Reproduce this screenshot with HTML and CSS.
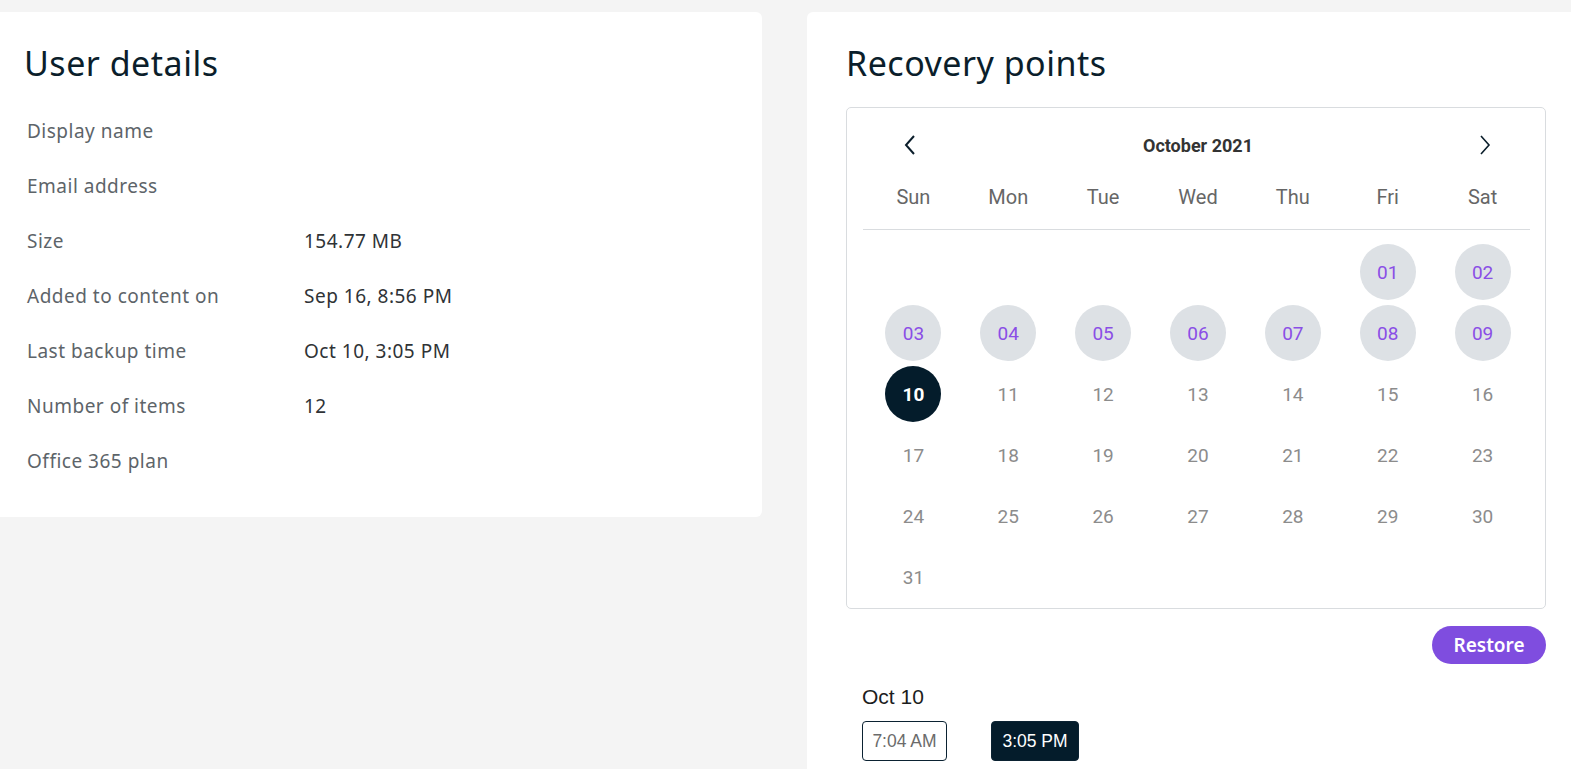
FILE: index.html
```html
<!DOCTYPE html>
<html lang="en">
<head>
  <meta charset="UTF-8">
  <title>User details</title>
  <link rel="stylesheet" href="styles.css">
</head>
<body>
  <div class="page">
    <section class="card user-card">
      <h1 class="card-title">User details</h1>
      <div class="details">
        <div class="row"><span class="label">Display name</span><span class="value"></span></div>
        <div class="row"><span class="label">Email address</span><span class="value"></span></div>
        <div class="row"><span class="label">Size</span><span class="value">154.77 MB</span></div>
        <div class="row"><span class="label">Added to content on</span><span class="value">Sep 16, 8:56 PM</span></div>
        <div class="row"><span class="label">Last backup time</span><span class="value">Oct 10, 3:05 PM</span></div>
        <div class="row"><span class="label">Number of items</span><span class="value">12</span></div>
        <div class="row"><span class="label">Office 365 plan</span><span class="value"></span></div>
      </div>
    </section>

    <section class="card recovery-card">
      <h1 class="card-title">Recovery points</h1>
      <div class="calendar">
        <div class="cal-head">
          <button class="nav prev">
            <svg width="14" height="22" viewBox="0 0 14 22"><path d="M11 2 L3 11 L11 20" fill="none" stroke="#0b1e2b" stroke-width="2"/></svg>
          </button>
          <div class="month">October 2021</div>
          <button class="nav next">
            <svg width="14" height="22" viewBox="0 0 14 22"><path d="M3 2 L11 11 L3 20" fill="none" stroke="#0b1e2b" stroke-width="1.6"/></svg>
          </button>
        </div>
        <div class="weekdays">
          <span>Sun</span><span>Mon</span><span>Tue</span><span>Wed</span><span>Thu</span><span>Fri</span><span>Sat</span>
        </div>
        <div class="days">
          <span></span><span></span><span></span><span></span><span></span>
          <span class="day has">01</span><span class="day has">02</span>
          <span class="day has">03</span><span class="day has">04</span><span class="day has">05</span><span class="day has">06</span><span class="day has">07</span><span class="day has">08</span><span class="day has">09</span>
          <span class="day selected">10</span><span class="day">11</span><span class="day">12</span><span class="day">13</span><span class="day">14</span><span class="day">15</span><span class="day">16</span>
          <span class="day">17</span><span class="day">18</span><span class="day">19</span><span class="day">20</span><span class="day">21</span><span class="day">22</span><span class="day">23</span>
          <span class="day">24</span><span class="day">25</span><span class="day">26</span><span class="day">27</span><span class="day">28</span><span class="day">29</span><span class="day">30</span>
          <span class="day">31</span>
        </div>
      </div>
      <div class="actions">
        <button class="restore">Restore</button>
      </div>
      <div class="points">
        <div class="points-date">Oct 10</div>
        <div class="times">
          <button class="time">7:04 AM</button>
          <button class="time active">3:05 PM</button>
        </div>
      </div>
    </section>
  </div>
</body>
</html>
```

FILE: styles.css
```css
/* page layout */
body {
  margin: 0;
  background: #f4f4f4;
  font-family: "Noto Sans", sans-serif;
  overflow: hidden;
}
.page {
  display: flex;
  gap: 45px;
  padding-top: 12px;
  height: 757px;
}
.card {
  background: #fff;
  border-radius: 6px;
}
.card-title {
  margin: 0;
  font-size: 34px;
  line-height: 40px;
  font-weight: 400;
  letter-spacing: 0.5px;
  color: #0b1e2b;
}

/* left card */
.user-card {
  width: 762px;
  height: 505px;
  box-sizing: border-box;
  padding: 31px 0 0 24px;
  border-radius: 0 6px 6px 0;
}
.details {
  margin-top: 20px;
  padding-left: 3px;
}
.row {
  display: flex;
  align-items: center;
  height: 55px;
  font-size: 19px;
  letter-spacing: 0.5px;
}
.label {
  width: 277px;
  color: #5d6469;
}
.value {
  color: #2f3336;
}

/* right card */
.recovery-card {
  flex: 1;
  padding: 31px 0 0 39px;
  border-radius: 6px 0 0 0;
}
.calendar {
  margin-top: 24px;
  width: 700px;
  height: 502px;
  box-sizing: border-box;
  border: 1px solid #d9dcdf;
  border-radius: 5px;
  padding: 17px 15px 0 16px;
  font-family: Roboto, sans-serif;
}
.cal-head {
  display: grid;
  grid-template-columns: repeat(7, 1fr);
  align-items: center;
  height: 40px;
  padding-left: 3px;
}
.nav {
  border: 0;
  background: none;
  padding: 0;
  justify-self: center;
  display: flex;
}
.prev { margin-left: -6px; }
.next { margin-left: 4px; }
.month {
  grid-column: 2 / 7;
  text-align: center;
  font-size: 18px;
  font-weight: 700;
  color: #333;
}
.weekdays {
  display: grid;
  grid-template-columns: repeat(7, 1fr);
  margin-top: 12px;
  padding: 0 0 12px 3px;
  border-bottom: 1px solid #d9dcdf;
  line-height: 40px;
  font-size: 20px;
  color: #666;
  text-align: center;
}
.days {
  display: grid;
  grid-template-columns: repeat(7, 1fr);
  row-gap: 5px;
  margin-top: 14px;
  padding-left: 3px;
}
.days span {
  height: 56px;
}
.day {
  justify-self: center;
  width: 56px;
  border-radius: 50%;
  display: flex;
  align-items: center;
  justify-content: center;
  font-size: 19px;
  color: #8c8c8c;
}
.day.has {
  background: #dde1e5;
  color: #8a4ee6;
}
.day.selected {
  background: #041c2b;
  color: #fff;
  font-weight: 700;
}

.actions {
  width: 700px;
  display: flex;
  justify-content: flex-end;
  margin-top: 17px;
}
.restore {
  width: 114px;
  height: 38px;
  border: 0;
  border-radius: 19px;
  background: #7f4ddf;
  color: #fff;
  font-family: "Noto Sans", sans-serif;
  font-size: 19px;
  font-weight: 600;
}
.points {
  padding-left: 16px;
  font-family: "Liberation Sans", Arial, sans-serif;
}
.points-date {
  margin-top: 22px;
  font-size: 21px;
  line-height: 22px;
  color: #1d1d1d;
}
.times {
  display: flex;
  gap: 44px;
  margin-top: 13px;
}
.time {
  width: 85px;
  height: 40px;
  padding: 0;
  border: 1.5px solid #0b2232;
  border-radius: 4px;
  background: #fff;
  color: #6b6b6b;
  font-family: "Liberation Sans", Arial, sans-serif;
  font-size: 17.5px;
}
.time.active {
  width: 88px;
  background: #041c2b;
  color: #fff;
}
```
